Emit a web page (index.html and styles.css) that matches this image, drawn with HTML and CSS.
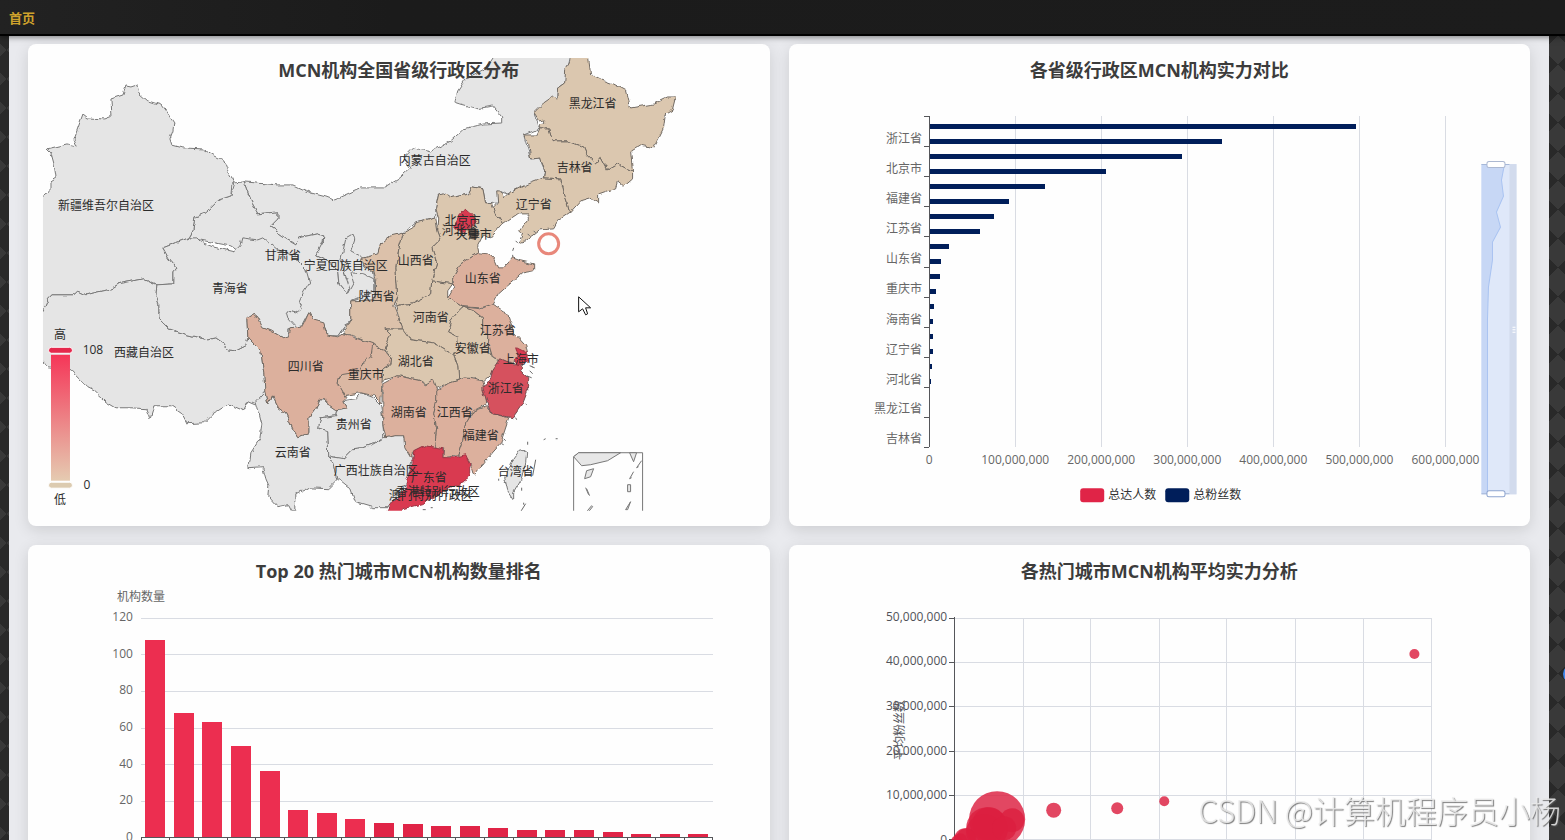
FILE: index.html
```html
<!DOCTYPE html>
<html lang="zh-CN">
<head>
<meta charset="utf-8">
<meta name="viewport" content="width=device-width, initial-scale=1">
<title>首页</title>
<link rel="stylesheet" href="styles.css">
</head>
<body>
<header class="topbar"><nav><a class="home-link" href="#">首页</a></nav></header>
<main class="board">
  <section class="card">
    <h2 class="card-title">MCN机构全国省级行政区分布</h2>
    <svg class="chart" viewBox="27 43 742 482" role="img" aria-label="MCN机构全国省级行政区分布">
      <defs>
        <clipPath id="map-clip"><rect x="42" y="57" width="712" height="453"/></clipPath>
        <filter id="coast" x="0" y="0" width="100%" height="100%" color-interpolation-filters="sRGB">
          <feTurbulence type="fractalNoise" baseFrequency="0.13" numOctaves="2" seed="4" result="noise"/>
          <feDisplacementMap in="SourceGraphic" in2="noise" scale="5" xChannelSelector="R" yChannelSelector="G"/>
        </filter>
        <linearGradient id="heat" x1="0" y1="0" x2="0" y2="1"><stop offset="0" stop-color="#f53658"/><stop offset="1" stop-color="#e5cbb1"/></linearGradient>
      </defs>
      <g clip-path="url(#map-clip)">
        <g class="land" filter="url(#coast)">
          <!-- 内蒙古, 甘肃, 宁夏 -->
          <path d="M243 181L277 184 293 184 310 192 325 196 333 199 360 187 383 187 398 178 410 167 403 157 413 147 430 151 450 140 463 128 483 123 502 122 502 117 492 105 475 108 460 104 454 102 457 90 465 78 485 68 497 50H571L564 82 557 87 556 98 533 112 538 128 523 134 530 158 540 157 544 170 543 177 507 193 497 190 497 202 485 203 482 187 472 185 468 193 450 197 438 193 435 207 435 217 415 222 403 232 380 243 373 270 375 300 350 300 350 318 337 335 322 243 323 235 317 233 298 237 295 243 285 237 269 226 277 218 277 211 257 213 250 200Z"/>
          <path d="M234 182L243 181 250 200 257 213 277 211 277 218 269 226 285 237 295 243 298 237 317 233 323 235 322 243 315 255 330 262 337 270 338 283 347 294 353 283 350 272 363 273 373 278 373 290 350 300 350 318 342 328 337 335 327 335 323 323 312 320 308 312 300 327 288 328 288 336 280 280 230 245 188 237 192 230 194 216 205 212 218 199 230 195Z"/>
          <path d="M323 240L315 255 330 262 337 270 338 283 347 294 349 288 340 260 345 238 352 234 354 238 350 250 363 257"/>
          <!-- 新疆 -->
          <path d="M30 197L43 195 49 190 49 180 55 176 53 163 50 152 46 148 67 143 76 145 73 138 82 113 87 117 103 118 111 115 110 98 122 94 125 85 130 86 136 84 138 92 147 100 160 104 167 113 173 122 172 130 169 138 171 144 182 147 202 148 213 155 223 160 227 170 234 182 231 184 230 195 218 199 205 212 194 216 192 230 188 237 162 247 168 258 176 268 173 272 173 283 156 284 143 278 118 283 110 288 85 294 77 290 73 294 52 294 47 299 43 308 30 320Z"/>
          <!-- 西藏 -->
          <path d="M30 330L43 308 47 299 52 294 73 294 77 290 85 294 110 288 118 283 143 278 156 284 155 295 158 303 158 318 168 328 187 334 207 339 215 337 222 342 227 349 235 350 245 345 247 337 255 340 260 350 263 373 265 394 260 397 255 403 248 400 243 410 227 403 213 412 203 422 186 423 180 412 170 405 153 405 149 418 145 408 130 407 115 407 105 401 93 390 87 387 70 370 48 367 43 362 30 350Z"/>
          <!-- 青海 -->
          <path d="M188 237L196 237 200 241 212 246 233 251 239 245 241 237 257 239 262 237 277 250 297 255 297 260 305 268 309 282 302 293 298 302 301 308 295 312 285 310 287 317 296 327 288 328 288 336 282 337 270 330 260 327 252 313 246 317 247 337 245 345 235 350 227 349 222 342 215 337 207 339 187 334 168 328 158 318 158 303 155 295 156 284 173 283 173 272 176 268 168 258 162 247Z"/>
          <!-- 云南, 贵州, 广西, 台湾 -->
          <path d="M257 407L255 400 264 390 267 403 271 395 277 407 285 413 292 428 297 436 308 432 308 417 315 408 319 398 325 398 325 403 336 410 335 415 320 417 318 427 327 430 328 458 333 462 337 478 327 488 307 487 295 493 295 510 290 510 287 504 277 506 267 495 268 485 265 478 262 467 248 468 250 452 259 438 261 423Z"/>
          <path d="M336 410L347 408 342 400 355 398 360 392 373 397 380 404 382 417 383 437 373 443 362 447 352 448 343 457 330 455 328 458 327 430 318 427 320 417 335 415Z"/>
          <path d="M328 458L330 455 343 457 352 448 362 447 373 443 383 437 402 433 405 443 412 457 410 465 406 483 398 493 387 507 372 507 355 502 350 488 340 480 337 478 333 462Z"/>
          <path d="M520 448L526 452 525 462 520 480 513 492 513 499 507 490 504 477 510 462Z"/>
          <g class="tan">
            <path d="M571 50L570 60 565 68 564 82 557 87 556 98 553 95 543 102 533 112 538 120 544 119 544 123 539 124 539 128 548 128 552 140 567 140 583 146 586 153 595 162 600 156 607 169 617 163 632 171 630 150 640 144 653 147 663 127 665 112 672 108 675 96 668 96 653 103 630 107 626 90 613 83 602 79 590 73 587 50Z"/>
            <path d="M539 128L548 128 552 140 567 140 583 146 586 153 595 162 600 156 607 169 617 163 632 171 632 177 623 185 617 180 615 187 598 193 598 202 590 197 580 200 569 212 565 197 560 178 543 177 544 170 540 157 530 158 528 143 523 134 536 134Z"/>
            <path d="M543 177L560 178 565 197 569 212 557 220 553 227 540 228 525 240 518 242 522 233 519 230 528 218 527 213 517 213 502 223 495 213 492 207 497 202 496 190 500 190 503 197 507 193 527 183Z"/>
            <path d="M491 203L485 203 482 187 472 185 468 193 450 197 443 192 438 193 435 207 438 218 437 230 440 238 431 247 436 262 431 280 452 283 452 277 460 263 478 252 477 245 483 233 490 237 502 223 495 213Z"/>
            <path d="M435 217L415 222 413 227 403 232 398 248 395 267 397 297 395 305 412 302 430 293 431 280 436 262 431 247 440 238 437 230Z"/>
            <path d="M431 280L452 283 447 290 447 297 462 306 458 310 450 320 447 332 457 337 458 347 453 354 433 342 410 339 402 330 395 305 412 302 430 293Z"/>
            <path d="M462 306L473 310 482 317 482 330 488 335 488 343 492 357 500 360 492 372 483 380 473 377 458 379 457 365 453 354 458 347 457 337 447 332 450 320 458 310Z"/>
            <path d="M402 328L385 328 390 333 384 348 391 357 390 363 382 368 380 380 398 375 420 380 435 388 458 379 457 365 453 354 433 342 410 339Z"/>
            <path class="tan-deep" d="M403 232L390 235 380 243 377 253 360 258 363 267 373 270 375 278 374 299 350 300 350 318 342 333 352 335 370 343 384 349 390 333 385 328 402 328 393 305 397 297 395 267 398 248Z"/>
          </g>
          <g class="peach">
            <path d="M452 277L460 263 478 252 488 253 493 258 497 267 503 267 512 257 520 260 533 263 533 270 522 272 507 285 498 293 493 303 480 307 462 306 447 297 453 286Z"/>
            <path d="M462 306L480 308 492 303 507 313 513 332 525 345 527 353 512 362 500 360 492 357 488 343 488 335 482 330 482 317 473 310Z"/>
            <path d="M382 383L397 375 420 380 425 384 433 379 437 390 436 400 433 413 436 427 434 447 425 445 413 451 410 457 404 447 403 435 393 435 385 437 382 423 382 403Z"/>
            <path d="M436 390L447 383 465 377 482 380 484 387 486 403 473 410 465 423 462 440 457 455 442 457 443 448 434 447 436 427 433 413 436 400Z"/>
            <path d="M487 405L492 413 508 417 502 435 500 443 483 462 473 475 470 465 467 458 457 455 462 440 465 423 473 410Z"/>
            <path class="peach-light" d="M370 343L384 349 391 357 390 363 382 368 380 402 373 395 360 392 343 395 337 383 340 372 365 362Z"/>
            <path d="M247 337L246 317 252 313 257 317 262 327 270 330 282 337 288 335 290 327 302 325 308 312 312 319 323 322 326 334 337 336 342 333 363 340 372 343 370 357 362 363 358 370 340 373 337 383 345 397 342 400 347 408 335 410 325 403 325 398 319 398 315 408 308 417 308 432 297 436 292 428 285 413 277 407 271 395 267 403 264 390 263 373 260 350Z"/>
          </g>
          <path class="rose" d="M500 358L512 363 522 363 520 370 527 377 527 390 522 403 512 417 492 413 486 400 482 388 490 377 492 370Z"/>
          <g class="red">
            <path d="M413 451L425 445 442 448 442 457 453 457 465 454 469 463 469 473 463 482 447 488 422 503 402 508 393 520 380 520 386 511 392 500 405 488 406 480 412 463Z"/>
            <path d="M464 208L472 215 475 222 467 227 465 232 454 228 455 222 458 215Z"/>
            <path d="M516 347L526 352 527 361 517 364 513 359 518 354Z"/>
          </g>
        </g>
        <path class="dark-area" d="M468 229L474 227 479 233 475 239 469 238Z"/>
        <path class="islands" d="M533 230l2 2M527 233l2 2M515 240l2 2M513 247l-1 3M512 254v2M529 365l3 1M529 370l3 3M526 375l5 2M531 366l3 1M525 403l1 1M515 417l1 2M503 438l2 2M501 443l2 1M527 441v3M543 439l2-1M555 438h2M498 478v2M521 487v3M523 502v2M535 459l-3 16M525 503l-5 8M422 509h3M430 507h2"/>
        <g class="inset">
          <path d="M573 456L578 452H642V511M573 511V456" class="inset-frame"/>
          <path d="M573 456L578 452H620L607 460 590 464 581 465ZM629 452L633 461 636 452ZM586 470L593 468 590 476 584 478ZM585 487l3 7M586 488l3 7M586 511l5-6 1 1-4 5M641 460l-5 7 2-1M633 471l-4 7 2-1M627 484h3v7h-3ZM630 501l-5 8h2Z"/>
        </g>
      </g>
      <g class="labels">
        <text x="105" y="209">新疆维吾尔自治区</text><text x="592" y="107">黑龙江省</text><text x="434" y="164">内蒙古自治区</text><text x="574" y="171">吉林省</text><text x="533" y="208">辽宁省</text><text x="462" y="224">北京市</text><text x="459" y="234">河北省</text><text x="473" y="238">天津市</text><text x="415" y="264">山西省</text><text x="482" y="282">山东省</text><text x="282" y="259">甘肃省</text><text x="345" y="269">宁夏回族自治区</text><text x="229" y="292">青海省</text><text x="376" y="300">陕西省</text><text x="430" y="321">河南省</text><text x="497" y="334">江苏省</text><text x="472" y="352">安徽省</text><text x="520" y="363">上海市</text><text x="415" y="365">湖北省</text><text x="305" y="370">四川省</text><text x="365" y="378">重庆市</text><text x="505" y="392">浙江省</text><text x="353" y="428">贵州省</text><text x="408" y="416">湖南省</text><text x="454" y="416">江西省</text><text x="480" y="439">福建省</text><text x="292" y="456">云南省</text><text x="375" y="474">广西壮族自治区</text><text x="428" y="481">广东省</text><text x="515" y="475">台湾省</text><text x="437" y="495">香港特别行政区</text><text x="430" y="499">澳门特别行政区</text><text x="143" y="356">西藏自治区</text>
        <text x="59" y="338">高</text><text x="59" y="503">低</text>
        <text x="92" y="353">108</text><text x="86" y="488">0</text>
      </g>
      <rect x="50" y="354" width="19" height="126" fill="url(#heat)"/>
      <rect x="47.500" y="346.500" width="24" height="6" rx="3" fill="#e5294d" stroke="#fff"/>
      <rect x="47.500" y="481.500" width="24" height="6" rx="3" fill="#dccbb0" stroke="#fff"/>
      <circle class="ring" cx="548" cy="243" r="10"/>
      <path class="pointer" d="M578 296V311L582 308 585 314 587 313 585 307H590Z"/>
    </svg>
  </section>

  <section class="card">
    <h2 class="card-title">各省级行政区MCN机构实力对比</h2>
    <svg class="chart" viewBox="789 44 741 482" role="img" aria-label="各省级行政区MCN机构实力对比">
      <path class="grid" d="M1015.500 116V447M1101.500 116V447M1187.500 116V447M1273.500 116V447M1359.500 116V447M1445.500 116V447"/>
      <path class="bars navy" d="M929 124h427v5h-427zM929 139h293v5h-293zM929 154h253v5h-253zM929 169h177v5h-177zM929 184h116v5h-116zM929 199h80v5h-80zM929 214h65v5h-65zM929 229h51v5h-51zM929 244h20v5h-20zM929 259h12v5h-12zM929 274h11v5h-11zM929 289h7v5h-7zM929 304h5v5h-5zM929 319h4v5h-4zM929 334h4v5h-4zM929 349h4v5h-4zM929 364h3v5h-3zM929 379h2v5h-2zM929 394h1v5h-1z"/>
      <path class="axis" d="M929.500 116V447M924 116.500h5M924 146.500h5M924 176.500h5M924 206.500h5M924 236.500h5M924 267.500h5M924 297.500h5M924 327.500h5M924 357.500h5M924 387.500h5M924 417.500h5M924 447.500h5"/>
      <g class="ticks ticks-y"><text x="922" y="143">浙江省</text><text x="922" y="173">北京市</text><text x="922" y="203">福建省</text><text x="922" y="233">江苏省</text><text x="922" y="263">山东省</text><text x="922" y="293">重庆市</text><text x="922" y="324">海南省</text><text x="922" y="354">辽宁省</text><text x="922" y="384">河北省</text><text x="922" y="413">黑龙江省</text><text x="922" y="443">吉林省</text></g>
      <g class="ticks ticks-x"><text x="929" y="464">0</text><text x="1015" y="464">100,000,000</text><text x="1101" y="464">200,000,000</text><text x="1187" y="464">300,000,000</text><text x="1273" y="464">400,000,000</text><text x="1359" y="464">500,000,000</text><text x="1445" y="464">600,000,000</text></g>
      <rect class="crimson" x="1080" y="488" width="24" height="14" rx="3"/><text class="legend" x="1108" y="499">总达人数</text>
      <rect class="navy" x="1165" y="488" width="24" height="14" rx="3"/><text class="legend" x="1193" y="499">总粉丝数</text>
      <g class="zoom">
        <rect x="1481" y="164" width="35" height="330" fill="#dfe8f9"/>
        <path d="M1481 164H1504L1501 180 1503 196 1496 212 1500 227 1492 242 1492 260 1488 287 1487 320V494H1481Z" fill="#c7d7f5"/>
        <path d="M1504 164L1501 180 1503 196 1496 212 1500 227 1492 242 1492 260 1488 287 1487 320V494" fill="none" stroke="#a9c3f1"/>
        <rect x="1509" y="164" width="7" height="330" fill="#d2dbed"/>
        <path d="M1481 164.500h28M1481 493.500h28" stroke="#a6b8d8"/>
        <rect x="1486.500" y="161.500" width="18" height="6" rx="2" fill="#fff" stroke="#acb8d1"/>
        <rect x="1486.500" y="490.500" width="18" height="6" rx="2" fill="#fff" stroke="#8fa5cf"/>
        <path d="M1512 327h3M1512 329.500h3M1512 332h3" stroke="#fff"/>
      </g>
    </svg>
  </section>

  <section class="card">
    <h2 class="card-title">Top 20 热门城市MCN机构数量排名</h2>
    <svg class="chart" viewBox="28 545 742 482" role="img" aria-label="Top 20 热门城市MCN机构数量排名">
      <path class="grid" d="M141 618.500H713M141 654.500H713M141 691.500H713M141 728.500H713M141 764.500H713M141 801.500H713"/>
      <path class="bars red-bar" d="M145 640h20v197h-20zM174 713h20v124h-20zM202 722h20v115h-20zM231 746h20v91h-20zM260 771h20v66h-20zM288 810h20v27h-20zM317 813h20v24h-20zM345 819h20v18h-20z"/>
      <path class="bars crimson" d="M374 823h20v14h-20zM403 824h20v13h-20zM431 826h20v11h-20zM460 826h20v11h-20zM488 828h20v9h-20zM517 830h20v7h-20zM545 830h20v7h-20zM574 830h20v7h-20zM603 832h20v5h-20zM631 834h20v3h-20zM660 834h20v3h-20zM688 834h20v3h-20z"/>
      <path class="axis" d="M141 837.500H713M141.500 838v5M169.500 838v5M198.500 838v5M227.500 838v5M255.500 838v5M284.500 838v5M312.500 838v5M341.500 838v5M370.500 838v5M398.500 838v5M427.500 838v5M455.500 838v5M484.500 838v5M513.500 838v5M541.500 838v5M570.500 838v5M598.500 838v5M627.500 838v5M655.500 838v5M684.500 838v5M712.500 838v5"/>
      <g class="ticks ticks-y"><text x="133" y="621">120</text><text x="133" y="658">100</text><text x="133" y="694">80</text><text x="133" y="731">60</text><text x="133" y="768">40</text><text x="133" y="804">20</text><text x="133" y="841">0</text></g>
      <g class="ticks ticks-x"><text x="141" y="601">机构数量</text></g>
    </svg>
  </section>

  <section class="card">
    <h2 class="card-title">各热门城市MCN机构平均实力分析</h2>
    <svg class="chart" viewBox="789 545 741 482" role="img" aria-label="各热门城市MCN机构平均实力分析">
      <path class="grid" d="M954 618.500H1431M954 662.500H1431M954 706.500H1431M954 751.500H1431M954 795.500H1431M954 839.500H1431M1023.500 618V840M1090.500 618V840M1159.500 618V840M1226.500 618V840M1295.500 618V840M1363.500 618V840M1431.500 618V840"/>
      <path class="axis" d="M954.500 617V840M949 618.500h5M949 662.500h5M949 706.500h5M949 751.500h5M949 795.500h5M949 839.500h5"/>
      <g class="ticks ticks-y dark"><text x="947" y="621">50,000,000</text><text x="947" y="665">40,000,000</text><text x="947" y="710">30,000,000</text><text x="947" y="755">20,000,000</text><text x="947" y="799">10,000,000</text><text x="947" y="844">0</text></g>
      <text class="axis-name" transform="translate(904 730) rotate(-90)">平均粉丝数</text>
      <g class="bubbles"><circle cx="997" cy="819" r="28"/><circle cx="987" cy="828" r="21"/><circle cx="989" cy="824" r="17"/><circle cx="984" cy="832" r="18"/><circle cx="1012" cy="820" r="12"/><circle cx="1004" cy="828" r="12"/><circle cx="966" cy="837" r="9"/><circle cx="965" cy="839" r="11"/><circle cx="957" cy="841" r="6"/><circle cx="960" cy="840" r="7"/><circle cx="1053.500" cy="810" r="7.500"/><circle cx="1117" cy="808" r="6"/><circle cx="1164" cy="801" r="5"/><circle cx="1414" cy="654" r="5"/></g>
    </svg>
  </section>
</main>
<div class="edge-dot"></div>
<p class="watermark">CSDN @计算机程序员小杨</p>
</body>
</html>
```
FILE: styles.css
```css
* { box-sizing: border-box; }

body {
  margin: 0;
  height: 100vh;
  overflow: hidden;
  font-family: "Open Sans", "Noto Sans CJK SC", sans-serif;
  background-color: #292929;
  background-image:
    linear-gradient(45deg, #393939 25%, transparent 25%, transparent 75%, #393939 75%),
    linear-gradient(-45deg, #393939 25%, transparent 25%, transparent 75%, #393939 75%);
  background-size: 29px 29px;
  background-position: 21px 21px;
}

.topbar {
  position: relative;
  z-index: 2;
  display: flex;
  align-items: center;
  height: 36px;
  padding: 0 9px;
  background: linear-gradient(90deg, #222, #1b1b1b 25%, #1c1c1c);
  border-bottom: 2px solid #000;
  box-shadow: 0 1px 6px rgba(0, 0, 0, 0.5);
}

.home-link {
  color: #cfa22c;
  font-size: 13px;
  font-weight: 700;
  text-decoration: none;
}

.board {
  display: grid;
  grid-template-columns: 1fr 1fr;
  gap: 19px;
  margin: 0 16px 0 9px;
  padding: 8px 19px 19px;
  background: #e9eaee;
}

.card {
  position: relative;
  background: #fefefe;
  border-radius: 8px;
  box-shadow: 0 4px 15px rgba(0, 0, 0, 0.12);
}

.card-title {
  position: absolute;
  top: 14px;
  left: 0;
  right: 0;
  margin: 0;
  color: #3c3c3c;
  font-size: 18px;
  font-weight: 700;
  line-height: 24px;
  text-align: center;
}

.chart { display: block; width: 100%; height: auto; font-size: 12px; }

.land path { fill: #e5e5e5; stroke: #777; stroke-width: 1; stroke-linejoin: round; }
.land .tan path { fill: #dbc7af; stroke: #716a63; }
.land .tan .tan-deep { fill: #dcc1aa; }
.land .peach path { fill: #dcb09d; stroke: #716a63; }
.land .peach .peach-light { fill: #dbb8a3; }
.land .rose { fill: #d6515e; stroke: #774b4f; }
.land .red path { fill: #d93a50; stroke: #a13645; }
.dark-area { fill: #3c3029; opacity: 0.75; }
.islands { fill: none; stroke: #686868; }
.inset path { fill: #e7e7e7; stroke: #777; }
.inset .inset-frame { fill: none; stroke: #777; stroke-width: 1; }
.labels { fill: #2b2b2b; text-anchor: middle; }
.ring { fill: none; stroke: #e8877a; stroke-width: 3; }
.pointer { fill: #fff; stroke: #111; }

.grid { fill: none; stroke: #d9dce3; shape-rendering: crispEdges; }
.axis { fill: none; stroke: #55565a; shape-rendering: crispEdges; }
.bars { shape-rendering: crispEdges; }
.navy { fill: #001e5a; }
.crimson { fill: #e02447; }
.red-bar { fill: #ec2e50; }
.ticks { fill: #666; }
.ticks.dark { fill: #505258; }
.ticks-y { text-anchor: end; }
.ticks-x { text-anchor: middle; }
.legend { fill: #333; }
.axis-name { fill: #55565c; text-anchor: middle; }
.bubbles { fill: #dc1f40; fill-opacity: 0.82; }

.edge-dot {
  position: fixed;
  top: 664px;
  right: -18px;
  width: 20px;
  height: 20px;
  border-radius: 50%;
  background: #3f86e8;
}

.watermark {
  position: fixed;
  right: 4px;
  bottom: 7px;
  margin: 0;
  color: rgba(235, 235, 235, 0.85);
  font-family: "Noto Sans CJK SC", sans-serif;
  font-size: 31px;
  font-weight: 300;
  line-height: 46px;
  text-shadow: 1px 1px 1px rgba(90, 90, 90, 0.8);
}
```
